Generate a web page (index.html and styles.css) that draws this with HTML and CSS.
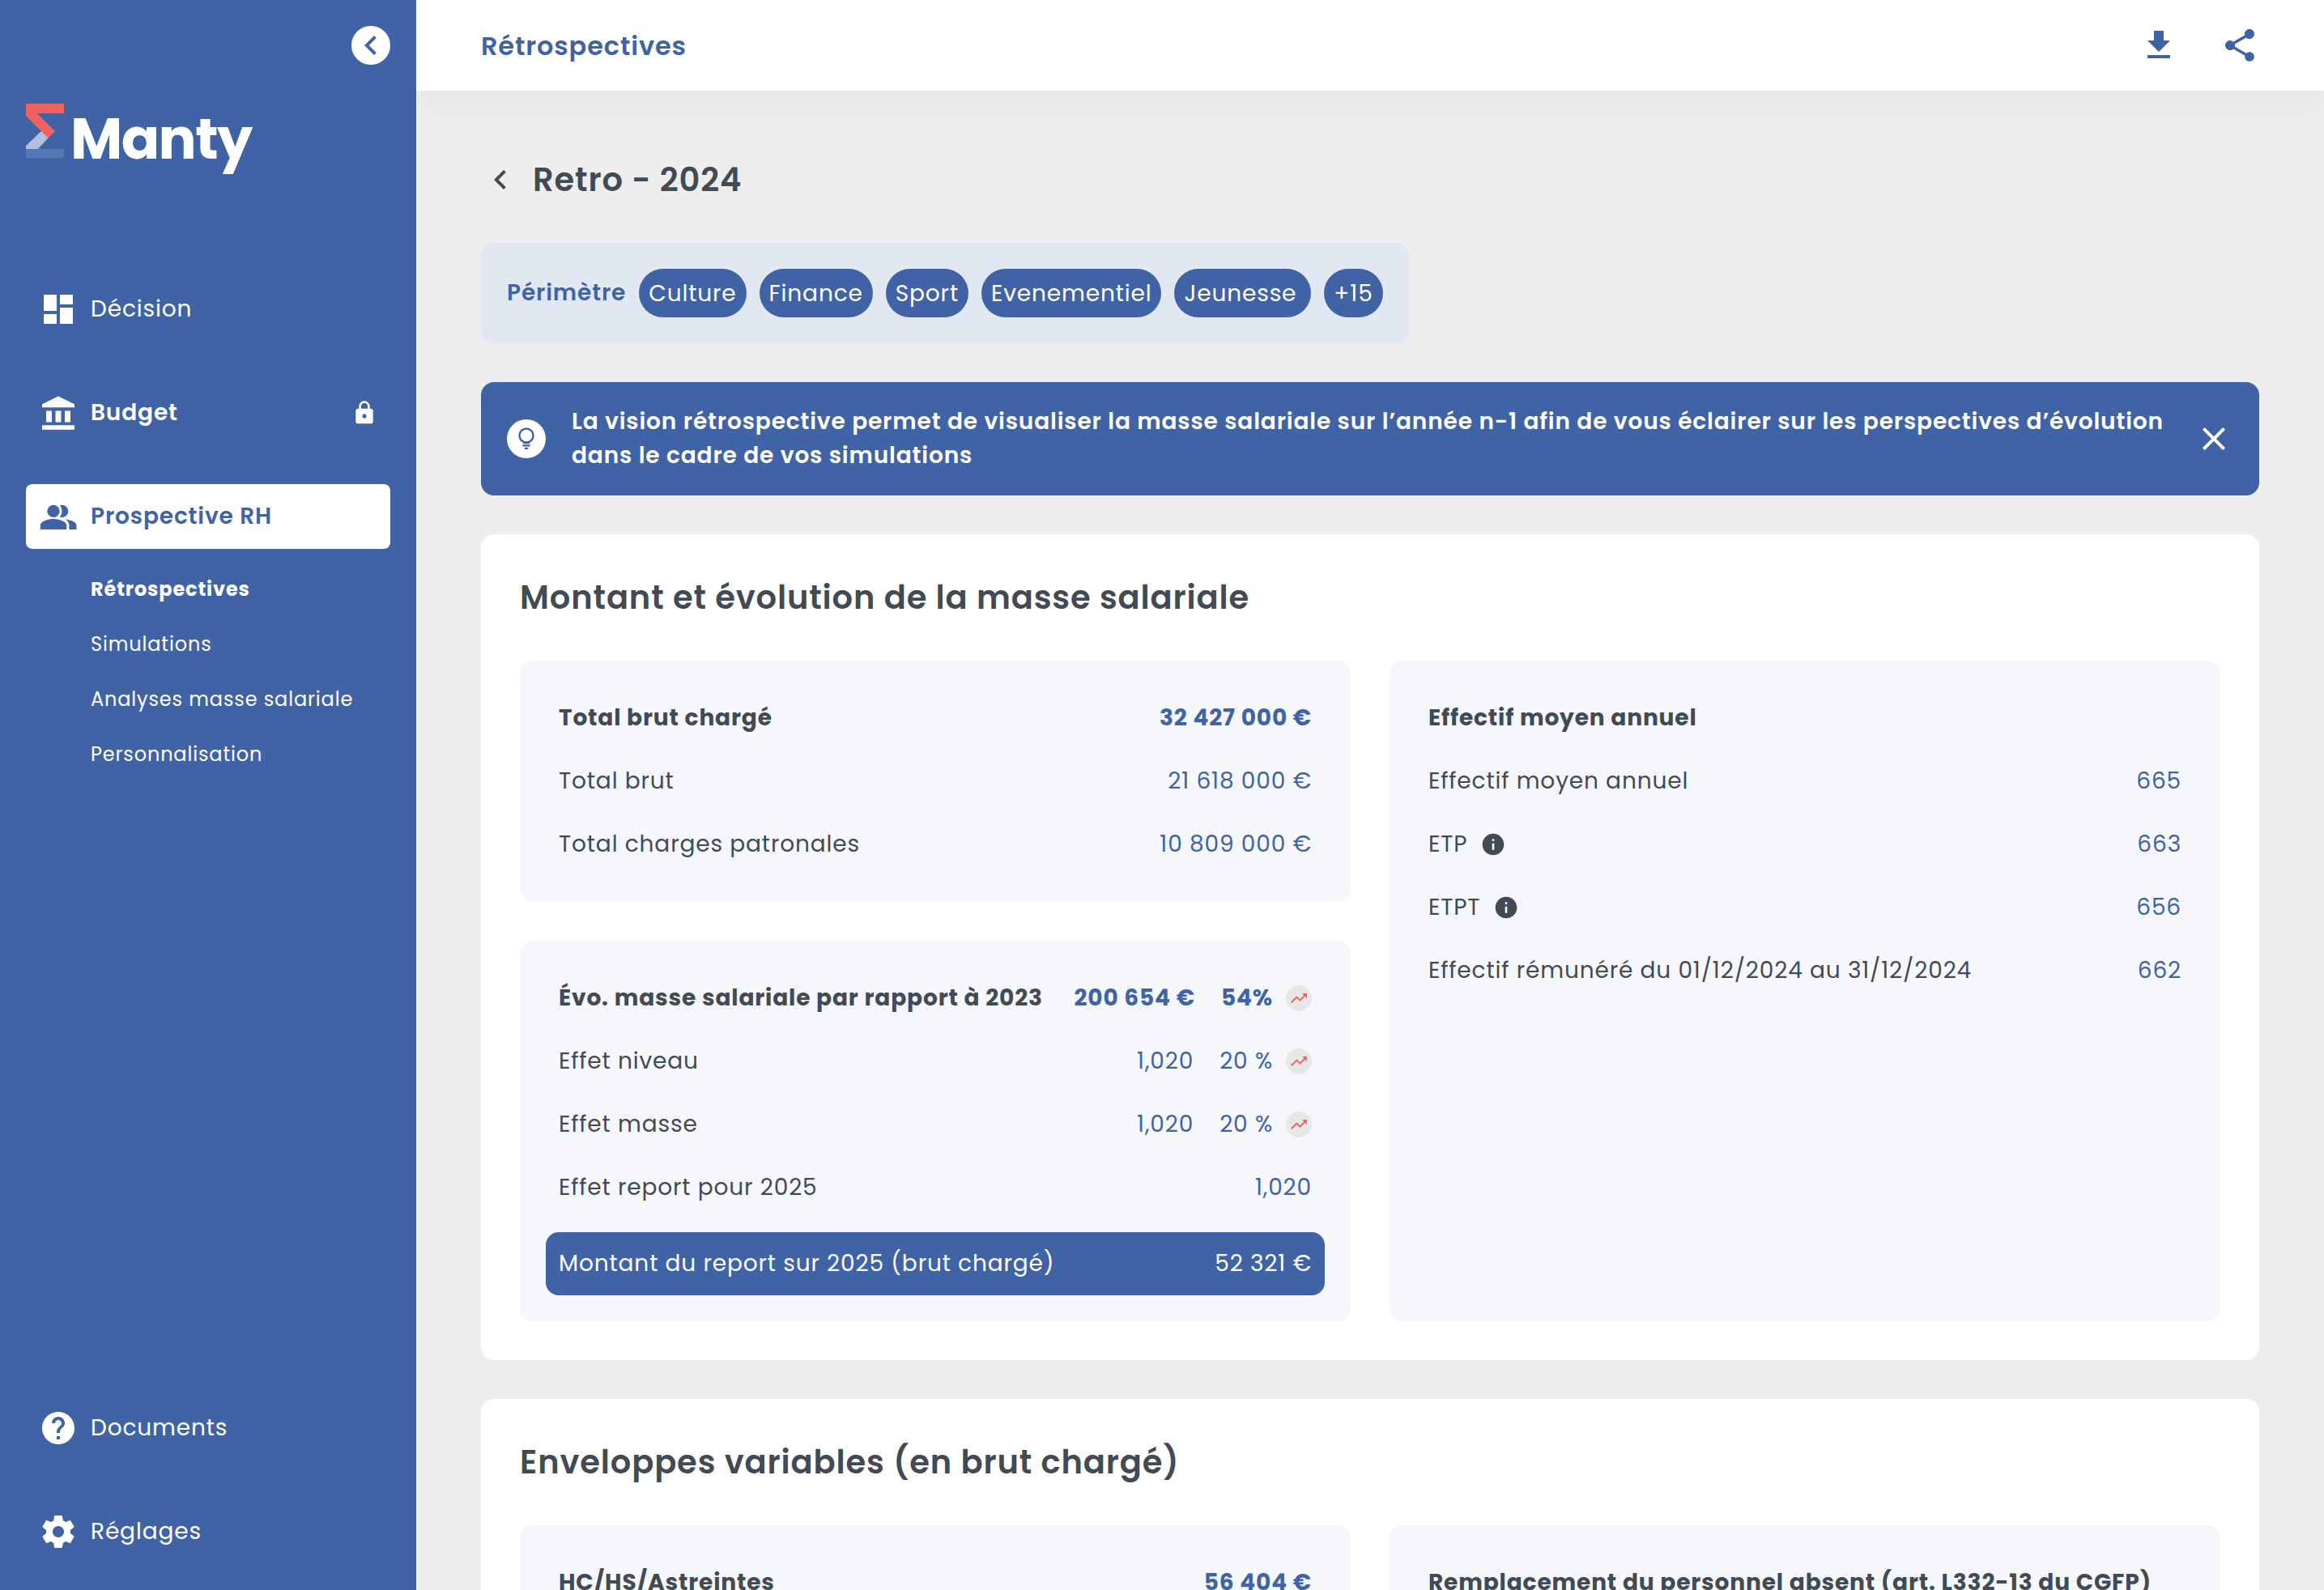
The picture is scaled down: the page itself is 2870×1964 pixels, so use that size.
FILE: index.html
```
<!DOCTYPE html>
<html lang="fr">
<head>
    <meta charset="UTF-8">
    <meta name="viewport" content="width=device-width, initial-scale=1.0">
    <title>Manty - Rétrospectives</title>
    <link rel="stylesheet" href="styles.css">
</head>
<body>

<div class="app">
    <!-- Sidebar -->
    <aside class="sidebar">
        <button class="toggle-btn">
            <svg class="icon" viewBox="0 0 24 24"><path d="M15.41 7.41L14 6l-6 6 6 6 1.41-1.41L10.83 12z"/></svg>
        </button>

        <div class="logo">
            <svg class="logo-mark" viewBox="0 0 47 67">
                <path fill="#5377b3" d="M0 56h47v11H0z"/>
                <path fill="#b1c1db" d="M19 34l9 8-13 14H0v-4z"/>
                <path fill="#f0625f" d="M0 0h47v12H14l22 22-8.500 8.500L0 15z"/>
            </svg>
            <span class="logo-text">Manty</span>
        </div>

        <nav class="nav">
            <a class="nav-item">
                <svg class="icon" viewBox="0 0 24 24"><path d="M3 13h8V3H3v10zm0 8h8v-6H3v6zm10 0h8V11h-8v10zm0-18v6h8V3h-8z"/></svg>
                <span>Décision</span>
            </a>
            <a class="nav-item semi">
                <svg class="icon" viewBox="0 0 24 24"><path d="M4.500 10.700h3.500v7H4.500zM10.250 10.700h3.500v7h-3.500zM16 10.700h3.500v7H16zM2 19.600h20v2.800H2zM12 1.800L2 6.600v2h20v-2z"/></svg>
                <span>Budget</span>
                <svg class="icon icon-lock" viewBox="0 0 24 24"><path d="M18 8h-1V6c0-2.760-2.240-5-5-5S7 3.240 7 6v2H6c-1.100 0-2 .9-2 2v10c0 1.100.9 2 2 2h12c1.100 0 2-.9 2-2V10c0-1.100-.9-2-2-2zm-6 9c-1.100 0-2-.9-2-2s.9-2 2-2 2 .9 2 2-.9 2-2 2zm3.100-9H8.900V6c0-1.710 1.390-3.100 3.100-3.100 1.710 0 3.100 1.390 3.100 3.100v2z"/></svg>
            </a>
            <a class="nav-item active">
                <svg class="icon" viewBox="0 0 24 24"><circle cx="9" cy="8.700" r="3.850"/><path d="M12.900 5.050a3.900 3.900 0 0 1 1.400-.2 3.850 3.850 0 0 1 0 7.700 3.900 3.900 0 0 1-1.400-.2 5.600 5.600 0 0 0 0-7.300zM.9 20v-2.600C.9 14.800 6.300 13.500 9 13.500s8.100 1.300 8.100 3.900V20zM18.700 20v-2.600c0-1.600-.9-2.800-2.200-3.700 2.800.4 6.700 1.500 6.700 3.700V20z"/></svg>
                <span>Prospective RH</span>
            </a>
            <div class="sub-nav">
                <a class="current">Rétrospectives</a>
                <a>Simulations</a>
                <a>Analyses masse salariale</a>
                <a>Personnalisation</a>
            </div>
        </nav>

        <nav class="nav nav-bottom">
            <a class="nav-item">
                <svg class="icon" viewBox="0 0 24 24"><path d="M12 2C6.480 2 2 6.480 2 12s4.480 10 10 10 10-4.480 10-10S17.520 2 12 2zm1 17h-2v-2h2v2zm2.070-7.750l-.9.920C13.450 12.900 13 13.500 13 15h-2v-.5c0-1.100.45-2.100 1.170-2.830l1.240-1.260c.37-.36.59-.86.59-1.410 0-1.100-.9-2-2-2s-2 .9-2 2H8c0-2.210 1.790-4 4-4s4 1.790 4 4c0 .88-.36 1.680-.93 2.250z"/></svg>
                <span>Documents</span>
            </a>
            <a class="nav-item">
                <svg class="icon" viewBox="0 0 24 24"><path d="M19.430 12.980c.04-.32.070-.64.070-.98s-.03-.66-.07-.98l2.110-1.650c.19-.15.240-.42.120-.64l-2-3.460c-.12-.22-.39-.3-.61-.22l-2.490 1c-.52-.4-1.080-.73-1.690-.98l-.38-2.650C14.460 2.180 14.250 2 14 2h-4c-.25 0-.46.18-.49.420l-.38 2.650c-.61.25-1.170.59-1.690.98l-2.490-1c-.23-.09-.49 0-.61.220l-2 3.460c-.13.22-.07.49.120.640l2.110 1.650c-.04.32-.07.65-.07.980s.03.66.070.980l-2.110 1.650c-.19.15-.24.42-.12.640l2 3.460c.12.22.39.3.61.220l2.490-1c.52.4 1.080.73 1.690.980l.38 2.650c.03.24.24.42.49.420h4c.25 0 .46-.18.49-.42l.38-2.650c.61-.25 1.170-.59 1.690-.98l2.490 1c.23.09.49 0 .61-.22l2-3.460c.12-.22.07-.49-.12-.64l-2.110-1.650zM12 15.500c-1.930 0-3.500-1.570-3.500-3.500s1.570-3.500 3.500-3.500 3.500 1.570 3.500 3.500-1.570 3.500-3.500 3.500z"/></svg>
                <span>Réglages</span>
            </a>
        </nav>
    </aside>

    <div class="main">
        <header class="topbar">
            <h1>Rétrospectives</h1>
            <div class="topbar-actions">
                <svg class="icon" viewBox="0 0 24 24"><path d="M19 9h-4V3H9v6H5l7 7 7-7zM5 18v2h14v-2H5z"/></svg>
                <svg class="icon" viewBox="0 0 24 24"><path d="M18 16.080c-.76 0-1.440.3-1.960.770L8.910 12.700c.05-.23.090-.46.090-.7s-.04-.47-.09-.7l7.050-4.110c.54.5 1.250.81 2.040.810 1.660 0 3-1.340 3-3s-1.340-3-3-3-3 1.340-3 3c0 .24.040.47.090.7L8.040 9.810C7.500 9.310 6.790 9 6 9c-1.660 0-3 1.340-3 3s1.340 3 3 3c.79 0 1.500-.31 2.040-.81l7.120 4.160c-.05.21-.08.43-.08.650 0 1.610 1.310 2.920 2.920 2.920s2.920-1.310 2.920-2.920-1.310-2.920-2.920-2.920z"/></svg>
            </div>
        </header>

        <main class="content">
            <div class="page-title">
                <svg class="icon" viewBox="0 0 24 24"><path d="M15.410 7.410L14 6l-6 6 6 6 1.410-1.410L10.830 12z"/></svg>
                <h2>Retro - 2024</h2>
            </div>

            <div class="perimeter">
                <span class="perimeter-label">Périmètre</span>
                <span class="chip">Culture</span>
                <span class="chip">Finance</span>
                <span class="chip">Sport</span>
                <span class="chip">Evenementiel</span>
                <span class="chip chip-wide">Jeunesse</span>
                <span class="chip">+15</span>
            </div>

            <div class="banner">
                <span class="banner-icon">
                    <svg viewBox="0 0 24 24"><circle cx="12" cy="9" r="6.400"/><path d="M9 15.700h6M8.500 18.300h7M10.300 20.900h3.400"/></svg>
                </span>
                <p>La vision rétrospective permet de visualiser la masse salariale sur l’année n-1 afin de vous éclairer sur les perspectives d’évolution<br>dans le cadre de vos simulations</p>
                <svg class="icon" viewBox="0 0 24 24"><path d="M19 6.410L17.590 5 12 10.590 6.410 5 5 6.410 10.590 12 5 17.590 6.410 19 12 13.410 17.590 19 19 17.590 13.410 12z"/></svg>
            </div>

            <section class="card">
                <h3>Montant et évolution de la masse salariale</h3>
                <div class="columns">
                    <div class="column">
                        <div class="panel">
                            <div class="row row-head"><span>Total brut chargé</span><span class="value">32 427 000 €</span></div>
                            <div class="row"><span>Total brut</span><span class="value">21 618 000 €</span></div>
                            <div class="row"><span>Total charges patronales</span><span class="value">10 809 000 €</span></div>
                        </div>
                        <div class="panel">
                            <div class="row row-head">
                                <span>Évo. masse salariale par rapport à 2023</span>
                                <span class="value">200 654 €</span>
                                <span class="percent">54%</span>
                                <span class="trend"><svg viewBox="0 0 24 24"><path d="M16 6l2.290 2.290-4.880 4.880-4-4L2 16.590 3.410 18l6-6 4 4 6.300-6.290L22 12V6z"/></svg></span>
                            </div>
                            <div class="row">
                                <span>Effet niveau</span>
                                <span class="value">1,020</span>
                                <span class="percent">20 %</span>
                                <span class="trend"><svg viewBox="0 0 24 24"><path d="M16 6l2.290 2.290-4.880 4.880-4-4L2 16.590 3.410 18l6-6 4 4 6.300-6.290L22 12V6z"/></svg></span>
                            </div>
                            <div class="row">
                                <span>Effet masse</span>
                                <span class="value">1,020</span>
                                <span class="percent">20 %</span>
                                <span class="trend"><svg viewBox="0 0 24 24"><path d="M16 6l2.290 2.290-4.880 4.880-4-4L2 16.590 3.410 18l6-6 4 4 6.300-6.290L22 12V6z"/></svg></span>
                            </div>
                            <div class="row"><span>Effet report pour 2025</span><span class="value">1,020</span></div>
                            <div class="row row-total"><span>Montant du report sur 2025 (brut chargé)</span><span class="value">52 321 €</span></div>
                        </div>
                    </div>
                    <div class="column">
                        <div class="panel">
                            <div class="row row-head"><span>Effectif moyen annuel</span></div>
                            <div class="row"><span>Effectif moyen annuel</span><span class="value">665</span></div>
                            <div class="row">
                                <span>ETP</span>
                                <svg class="info" viewBox="0 0 24 24"><path d="M12 2C6.480 2 2 6.480 2 12s4.480 10 10 10 10-4.480 10-10S17.520 2 12 2zm1 15h-2v-6h2v6zm0-8h-2V7h2v2z"/></svg>
                                <span class="value">663</span>
                            </div>
                            <div class="row">
                                <span>ETPT</span>
                                <svg class="info" viewBox="0 0 24 24"><path d="M12 2C6.480 2 2 6.480 2 12s4.480 10 10 10 10-4.480 10-10S17.520 2 12 2zm1 15h-2v-6h2v6zm0-8h-2V7h2v2z"/></svg>
                                <span class="value">656</span>
                            </div>
                            <div class="row"><span>Effectif rémunéré du 01/12/2024 au 31/12/2024</span><span class="value">662</span></div>
                        </div>
                    </div>
                </div>
            </section>

            <section class="card">
                <h3>Enveloppes variables (en brut chargé)</h3>
                <div class="columns">
                    <div class="column">
                        <div class="panel">
                            <div class="row row-head"><span>HC/HS/Astreintes</span><span class="value">56 404 €</span></div>
                        </div>
                    </div>
                    <div class="column">
                        <div class="panel">
                            <div class="row row-head"><span>Remplacement du personnel absent (art. L332-13 du CGFP)</span></div>
                        </div>
                    </div>
                </div>
            </section>
        </main>
    </div>
</div>

</body>
</html>
```
FILE: styles.css
```
* {
    box-sizing: border-box;
}
body {
    margin: 0;
    font-family: 'Poppins', 'Inter', sans-serif;
    font-size: 28px;
    line-height: 42px;
    letter-spacing: 0.86px;
    color: #424a53;
    background-color: #eeeeee;
}
h1, h2, h3, p {
    margin: 0;
}
.app {
    display: flex;
    height: 1964px;
    overflow: hidden;
}
.icon {
    width: 48px;
    height: 48px;
    flex-shrink: 0;
    fill: currentColor;
}

/* Sidebar */
.sidebar {
    display: flex;
    flex-direction: column;
    width: 514px;
    flex-shrink: 0;
    padding: 32px;
    background-color: #4063a6;
    color: #fff;
    z-index: 20;
}
.toggle-btn {
    align-self: flex-end;
    width: 48px;
    height: 48px;
    padding: 0;
    border: none;
    border-radius: 50%;
    background-color: #fff;
    color: #4063a6;
    cursor: pointer;
}
.logo {
    display: flex;
    height: 88px;
    margin-top: 48px;
}
.logo-mark {
    width: 47px;
    height: 67px;
}
.logo-text {
    margin-left: 8px;
    font-size: 70px;
    line-height: 87px;
    font-weight: 700;
    letter-spacing: -1.6px;
}
.nav {
    margin-top: 126px;
}
.nav-bottom {
    margin-top: auto;
}
.nav-item {
    display: flex;
    align-items: center;
    gap: 16px;
    height: 80px;
    padding: 0 16px;
    margin-bottom: 48px;
    border-radius: 8px;
}
.nav-item.semi {
    font-weight: 600;
}
.nav-item.active {
    background-color: #fff;
    color: #4063a6;
    font-weight: 600;
    margin-bottom: 16px;
}
.nav-bottom .nav-item:last-child {
    margin-bottom: 0;
}
.icon-lock {
    width: 32px;
    height: 32px;
    margin-left: auto;
}
.sub-nav {
    display: flex;
    flex-direction: column;
    padding-left: 80px;
    font-size: 24px;
    line-height: 68px;
}
.sub-nav .current {
    font-weight: 700;
}

/* Top bar */
.main {
    flex: 1;
    min-width: 0;
}
.topbar {
    display: flex;
    align-items: center;
    justify-content: space-between;
    height: 112px;
    padding: 0 80px;
    background-color: #fff;
    color: #4063a6;
    box-shadow: 0 20px 32px rgba(0, 0, 0, 0.035);
}
.topbar h1 {
    padding-top: 2px;
    font-size: 32px;
    font-weight: 600;
}
.topbar-actions {
    display: flex;
    gap: 52px;
}

/* Content */
.content {
    padding: 80px;
}
.page-title {
    display: flex;
    align-items: center;
    gap: 16px;
    height: 60px;
    margin-bottom: 48px;
}
.page-title h2, .card h3 {
    font-size: 40px;
    line-height: 60px;
    font-weight: 600;
}
.perimeter {
    display: inline-flex;
    align-items: center;
    gap: 16px;
    padding: 32px;
    border-radius: 16px;
    background-color: #e1e8f2;
}
.perimeter-label {
    color: #4063a6;
    font-weight: 600;
}
.chip {
    height: 60px;
    line-height: 61px;
    padding: 0 12px;
    border-radius: 30px;
    background-color: #4063a6;
    color: #fff;
}
.chip-wide {
    padding-right: 18px;
}
.banner {
    display: flex;
    align-items: center;
    height: 140px;
    margin-top: 48px;
    padding: 0 32px;
    border-radius: 16px;
    background-color: #4063a6;
    color: #fff;
    font-weight: 600;
}
.banner p {
    flex: 1;
    margin-left: 32px;
    white-space: nowrap;
}
.banner-icon {
    display: flex;
    align-items: center;
    justify-content: center;
    width: 48px;
    height: 48px;
    border-radius: 50%;
    background-color: #fff;
}
.banner-icon svg {
    width: 32px;
    height: 32px;
    fill: none;
    stroke: #4063a6;
    stroke-width: 1.8;
}

/* Cards */
.card {
    margin-top: 48px;
    padding: 48px;
    border-radius: 16px;
    background-color: #fff;
}
.card h3 {
    margin-bottom: 48px;
}
.columns {
    display: grid;
    grid-template-columns: 1fr 1fr;
    gap: 48px;
}
.column {
    display: flex;
    flex-direction: column;
    gap: 48px;
}
.panel {
    flex-grow: 1;
    padding: 32px;
    border-radius: 16px;
    background-color: #f5f7fb;
}
.row {
    display: flex;
    align-items: center;
    height: 78px;
    padding: 0 16px;
    white-space: nowrap;
}
.row-head {
    font-weight: 700;
}
.row-total {
    margin-top: 16px;
    border-radius: 16px;
    background-color: #4063a6;
    color: #fff;
}
.value {
    margin-left: auto;
    color: #4063a6;
}
.row-total .value {
    color: #fff;
}
.percent {
    margin-left: 32px;
    color: #4063a6;
}
.trend {
    display: flex;
    align-items: center;
    justify-content: center;
    width: 32px;
    height: 32px;
    margin-left: 16px;
    border-radius: 50%;
    background-color: #e7e7e7;
}
.trend svg {
    width: 24px;
    height: 24px;
    fill: #f0625f;
}
.info {
    width: 32px;
    height: 32px;
    margin-left: 16px;
    fill: #424a53;
}
```
